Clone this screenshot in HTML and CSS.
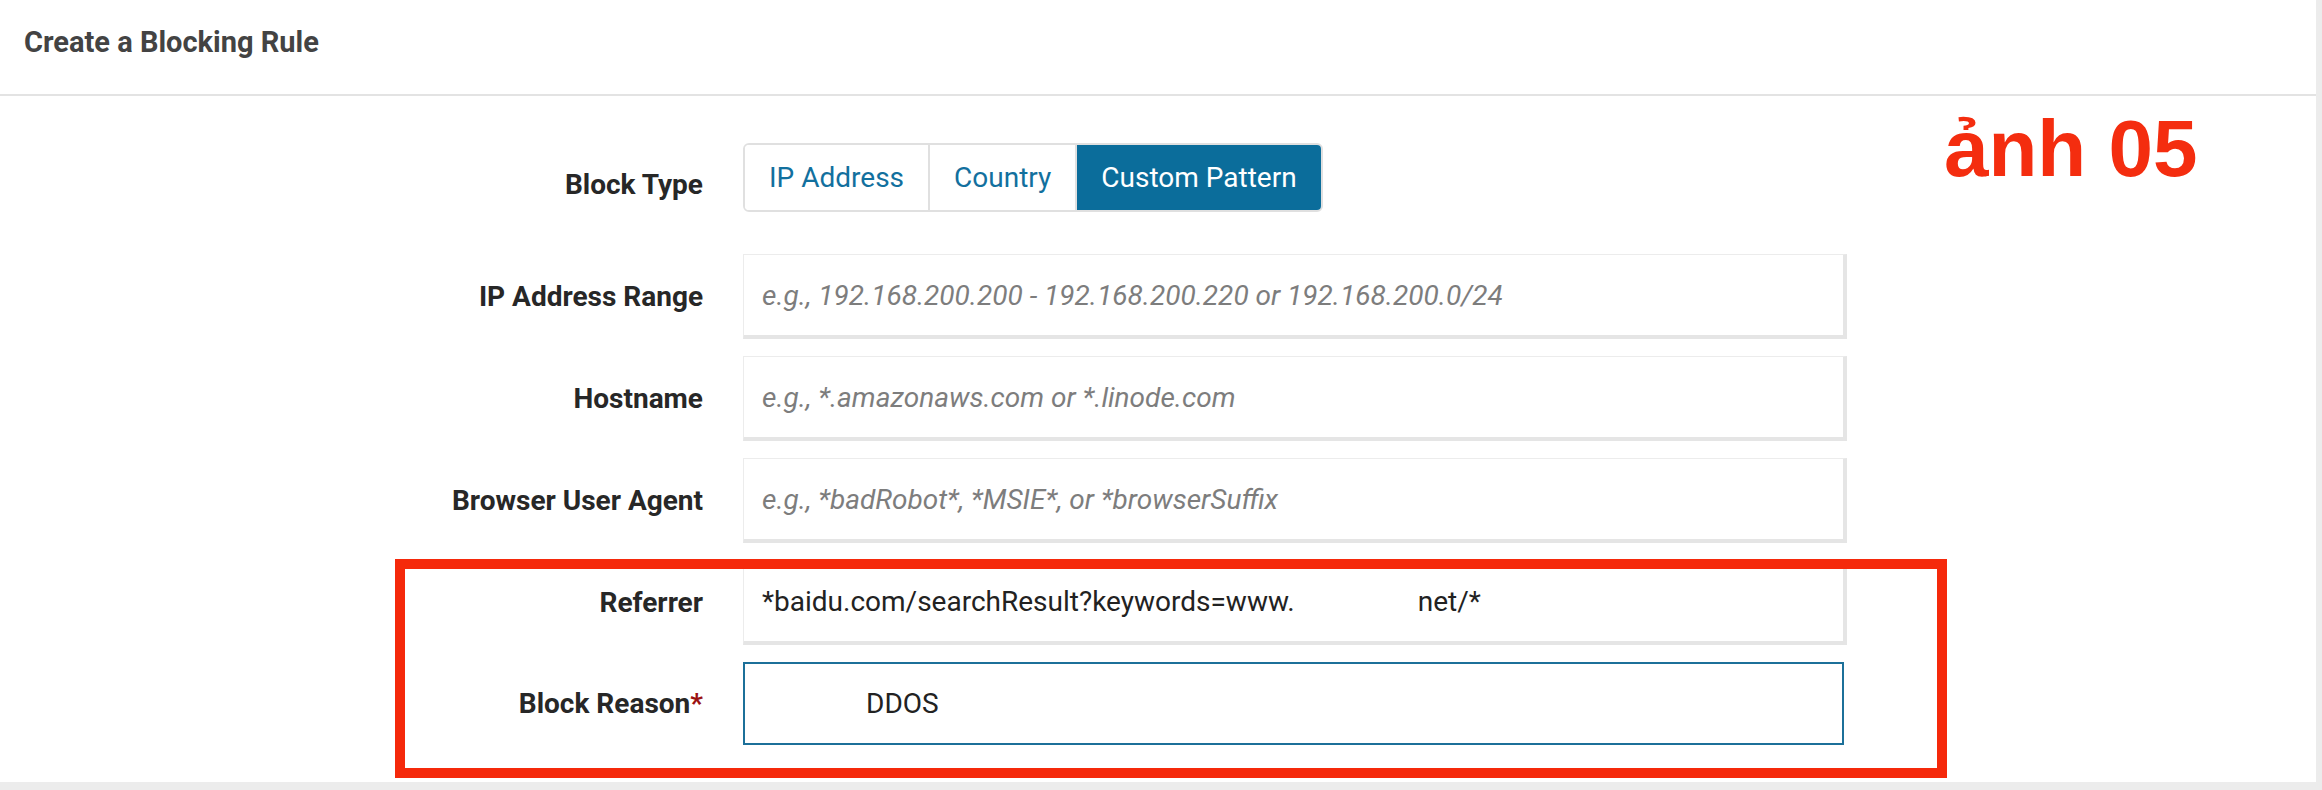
FILE: index.html
```html
<!DOCTYPE html>
<html lang="en">
<head>
<meta charset="utf-8">
<title>Create a Blocking Rule</title>
<link rel="stylesheet" href="styles.css">
</head>
<body>
<div class="panel">
  <div class="panel-header">
    <h2 class="panel-title">Create a Blocking Rule</h2>
  </div>
  <div class="panel-body">
    <div class="form-grid">
      <div class="label label-type">Block Type</div>
      <div class="btn-group">
        <span class="btn">IP Address</span>
        <span class="btn">Country</span>
        <span class="btn btn-active">Custom Pattern</span>
      </div>

      <div class="label">IP Address Range</div>
      <div class="field"><span class="placeholder">e.g., 192.168.200.200 - 192.168.200.220 or 192.168.200.0/24</span></div>

      <div class="label">Hostname</div>
      <div class="field"><span class="placeholder">e.g., *.amazonaws.com or *.linode.com</span></div>

      <div class="label">Browser User Agent</div>
      <div class="field"><span class="placeholder">e.g., *badRobot*, *MSIE*, or *browserSuffix</span></div>

      <div class="label">Referrer</div>
      <div class="field"><span class="value">*baidu.com/searchResult?keywords=www.</span><span class="gap gap-domain"></span><span class="value">net/*</span></div>

      <div class="label">Block Reason<span class="req">*</span></div>
      <div class="field field-focus"><span class="gap gap-reason"></span><span class="value">DDOS</span></div>
    </div>
  </div>
  <div class="annot-box"></div>
  <div class="annot-label">ảnh 05</div>
</div>
</body>
</html>
```

FILE: styles.css
```css
html, body {
  margin: 0;
  padding: 0;
}
body {
  background: #ececec;
  font-family: Roboto, "Noto Sans", Arial, sans-serif;
  width: 2322px;
  height: 790px;
  overflow: hidden;
}
.panel {
  position: relative;
  width: 2316px;
  height: 782px;
  background: #ffffff;
}
.panel-header {
  height: 94px;
  border-bottom: 2px solid #e3e3e3;
  display: flex;
  align-items: center;
  padding-left: 24px;
}
.panel-title {
  margin: 0;
  font-size: 29px;
  font-weight: 700;
  color: #434343;
  padding-bottom: 10px;
}
.panel-body {
  padding-top: 47px;
}
.form-grid {
  display: grid;
  grid-template-columns: 703px 1104px;
  column-gap: 40px;
  row-gap: 17px;
  align-items: center;
}
.label {
  text-align: right;
  font-size: 28px;
  font-weight: 700;
  color: #272727;
}
.label-type {
  align-self: start;
  line-height: 33px;
  padding-top: 25px;
}
.req {
  color: #9b1111;
}
.btn-group {
  display: flex;
  justify-self: start;
  height: 69px;
  box-sizing: border-box;
  border: 2px solid #e0e0e0;
  border-radius: 6px;
  overflow: hidden;
  margin-bottom: 25px;
}
.btn {
  display: flex;
  align-items: center;
  padding: 0 24px;
  font-size: 28px;
  color: #12709e;
  background: #ffffff;
}
.btn + .btn {
  border-left: 2px solid #e0e0e0;
}
.btn-active {
  background: #0b6d9b;
  color: #ffffff;
  border-left-color: #0b6d9b;
}
.field {
  box-sizing: border-box;
  height: 85px;
  display: flex;
  align-items: center;
  padding-left: 18px;
  background: #ffffff;
  border: 1px solid #ececec;
  border-right: 4px solid #e5e5e5;
  border-bottom: 4px solid #e5e5e5;
  font-size: 28px;
  white-space: pre;
}
.field-focus {
  height: 83px;
  width: 1101px;
  border: 2px solid #1c7099;
  padding-left: 17px;
}
.placeholder {
  color: #7d7d7d;
  font-style: italic;
}
.value {
  color: #222222;
}
.gap {
  display: inline-block;
}
.gap-domain {
  width: 123px;
}
.gap-reason {
  width: 104px;
}
.annot-box {
  position: absolute;
  left: 395px;
  top: 559px;
  width: 1552px;
  height: 219px;
  box-sizing: border-box;
  border: 10px solid #f5290b;
}
.annot-label {
  position: absolute;
  left: 1944px;
  top: 109px;
  font-family: "Liberation Sans", Arial, sans-serif;
  font-weight: 700;
  font-size: 80px;
  line-height: 1;
  color: #f42d0f;
}
```
